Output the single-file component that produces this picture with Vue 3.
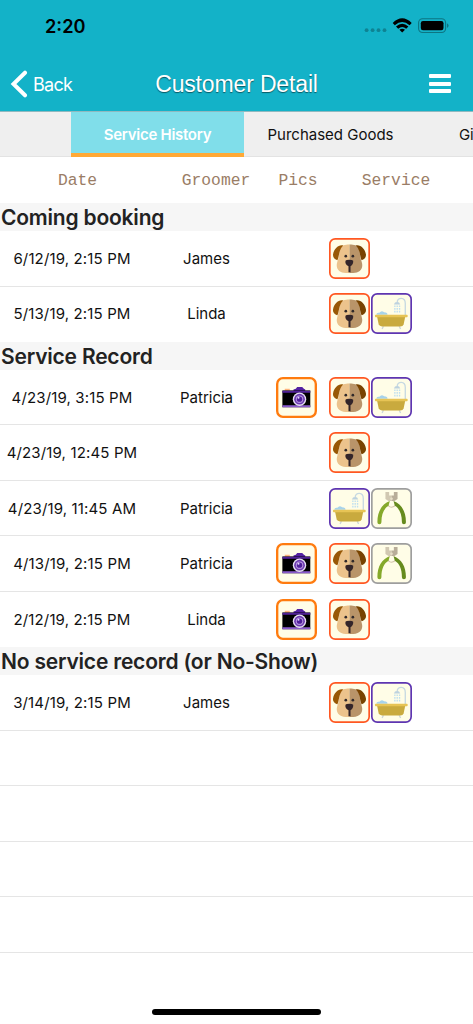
<script setup>
const columns = ['Date', 'Groomer', 'Pics', 'Service']

const sections = [
  {
    title: 'Coming booking',
    rows: [
      { date: '6/12/19, 2:15 PM', groomer: 'James', pics: false, services: ['dog'] },
      { date: '5/13/19, 2:15 PM', groomer: 'Linda', pics: false, services: ['dog', 'bath'] },
    ],
  },
  {
    title: 'Service Record',
    rows: [
      { date: '4/23/19, 3:15 PM', groomer: 'Patricia', pics: true, services: ['dog', 'bath'] },
      { date: '4/23/19, 12:45 PM', groomer: '', pics: false, services: ['dog'] },
      { date: '4/23/19, 11:45 AM', groomer: 'Patricia', pics: false, services: ['bath', 'clipper'] },
      { date: '4/13/19, 2:15 PM', groomer: 'Patricia', pics: true, services: ['dog', 'clipper'] },
      { date: '2/12/19, 2:15 PM', groomer: 'Linda', pics: true, services: ['dog'] },
    ],
  },
  {
    title: 'No service record (or No-Show)',
    rows: [
      { date: '3/14/19, 2:15 PM', groomer: 'James', pics: false, services: ['dog', 'bath'] },
    ],
  },
]
</script>

<template>
  <div class="phone">
    <svg class="symbols" width="0" height="0" aria-hidden="true">
      <symbol id="dog" viewBox="0 0 122 122">
        <rect x="2.5" y="2.5" width="117" height="117" rx="16" fill="#fffde7" stroke="#ff5722" stroke-width="5" />
        <path d="M61 19C47 19 37 21 33 32C29 48 30 58 25 70C18 90 30 104 50 104H61Z" fill="#ecc38c" />
        <path d="M61 19C75 19 85 21 89 32C93 48 92 58 97 70C104 90 92 104 72 104H61Z" fill="#b99469" />
        <path d="M42 22C28 19 15 32 12 49C11 59 18 64 25 66C31 55 28 36 42 22Z" fill="#985806" />
        <path d="M80 22C94 19 107 32 110 49C111 59 104 64 97 66C91 55 94 36 80 22Z" fill="#784300" />
        <circle cx="50" cy="54" r="4" fill="#30292b" />
        <circle cx="71" cy="54" r="4" fill="#30292b" />
        <path d="M49 68Q51 65 60 65Q70 65 72 68Q73 79 64 84V102H58V84Q47 79 49 68Z" fill="#33252a" />
      </symbol>
      <symbol id="bath" viewBox="0 0 122 122">
        <rect x="2.5" y="2.5" width="117" height="117" rx="16" fill="#fffde7" stroke="#5e35b1" stroke-width="5" />
        <path d="M102 67V31C102 11 78 12 78 28" fill="none" stroke="#c7d9e2" stroke-width="4" />
        <path d="M68 34Q70 27 78 27Q85 27 87 34Z" fill="#bdd2df" />
        <path d="M71 37V61M78 37V61M85 37V61" stroke="#bfdff0" stroke-width="4" stroke-dasharray="5 3" />
        <path d="M16 65Q16 57 25 59Q31 50 39 57Q50 57 49 65Z" fill="#a7d3eb" />
        <path d="M37 99L33 107M84 99L88 107" stroke="#cbd5da" stroke-width="4" />
        <path d="M18 70H102L97 94Q95 100 87 100H33Q25 99 23 94Z" fill="#c9aa3e" />
        <rect x="12" y="65" width="97" height="7" rx="2" fill="#e7c455" />
      </symbol>
      <symbol id="clipper" viewBox="0 0 122 122">
        <rect x="2.5" y="2.5" width="117" height="117" rx="16" fill="#fffde7" stroke="#9e9e9e" stroke-width="5" />
        <path d="M50 45C48 61 73 61 73 45" fill="none" stroke="#d1c2aa" stroke-width="3" />
        <path d="M56 39C32 49 19 69 19 102Q19 108 25 108Q31 108 31 102C31 78 38 61 52 53Z" fill="#85a92b" />
        <path d="M67 39C91 49 104 69 104 102Q104 108 98 108Q92 108 92 102C92 78 85 61 71 53Z" fill="#668b1d" />
        <path d="M43 12H54V22H61V39L52 39L43 33Z" fill="#d1c8b2" />
        <path d="M61 22H68V12H79V33L70 39L61 39Z" fill="#b8ad99" />
        <circle cx="61" cy="32" r="4" fill="#e7dfc8" />
      </symbol>
      <symbol id="camera" viewBox="0 0 122 122">
        <rect x="3.5" y="3.5" width="115" height="115" rx="17" fill="#fffde7" stroke="#ff7b0f" stroke-width="7" />
        <rect x="26" y="35" width="15" height="6" fill="#ffb47c" />
        <path d="M52 42V37L59 35L63 30H78L83 35L87 37V42Z" fill="#5422a2" />
        <rect x="19" y="40" width="83" height="50" fill="#000" />
        <path d="M19 41H102V47H19Z" fill="#502296" />
        <path d="M19 84H102V90H19Z" fill="#8a5bcc" />
        <circle cx="70" cy="66" r="20" fill="#e7dff3" />
        <circle cx="70" cy="66" r="16" fill="#6c3bb1" />
        <circle cx="70" cy="66" r="11" fill="#b696df" />
        <circle cx="70" cy="66" r="8" fill="#50209b" />
        <circle cx="67" cy="62" r="3" fill="#e4d5ff" />
      </symbol>
    </svg>

    <header>
      <div class="status">
        <span class="clock">2:20</span>
        <svg class="signals" width="86" height="18" viewBox="0 0 86 18">
          <g fill="#0e8393"><circle cx="3.6" cy="12.2" r="1.9" /><circle cx="9.6" cy="12.2" r="1.9" /><circle cx="15.5" cy="12.2" r="1.9" /><circle cx="21.5" cy="12.2" r="1.9" /></g>
          <path d="M29.7 5Q39.2 -4.3 48.7 5L46.6 7.2Q39.2 .7 31.8 7.2ZM33 8.5Q39.2 3.2 45.4 8.5L43.2 10.7Q39.2 7.4 35.2 10.7ZM36.4 11.8Q39.2 9.8 42 11.8L39.2 14.4Z" fill="#000" />
          <rect x="55.6" y=".8" width="27" height="13.7" rx="4" fill="none" stroke="#0d7582" stroke-width="1.1" />
          <rect x="57.8" y="3" width="22.7" height="9.3" rx="2.2" />
          <path d="M84 5.3Q87.3 7.6 84 10Z" fill="#0d7582" />
        </svg>
      </div>
      <nav>
        <div class="back">
          <svg width="18" height="28" viewBox="0 0 18 28"><path d="M15 2.7L3.5 14L15 25.3" fill="none" stroke="#fff" stroke-width="4" stroke-linecap="round" stroke-linejoin="miter" /></svg>
          <span>Back</span>
        </div>
        <h1>Customer Detail</h1>
        <div class="menu"><i></i><i></i><i></i></div>
      </nav>
    </header>

    <div class="tabs">
      <div class="tab blank"></div>
      <div class="tab active"><span>Service History</span></div>
      <div class="tab goods"><span>Purchased Goods</span></div>
      <div class="tab gift"><span>Gi</span></div>
    </div>

    <div class="columns">
      <span v-for="c in columns" :key="c">{{ c }}</span>
    </div>

    <section v-for="s in sections" :key="s.title">
      <h2>{{ s.title }}</h2>
      <div v-for="r in s.rows" :key="r.date" class="row">
        <span class="date">{{ r.date }}</span>
        <span class="groomer">{{ r.groomer }}</span>
        <span class="pics"><svg v-if="r.pics"><use href="#camera" /></svg></span>
        <span class="services"><svg v-for="i in r.services" :key="i"><use :href="'#' + i" /></svg></span>
      </div>
    </section>
    <div v-for="n in 4" :key="n" class="row"></div>
    <footer><div class="home"></div></footer>
  </div>
</template>

<style>
body { background: #fff; }
</style>

<style scoped>
.phone { width: 473px; height: 1024px; overflow: hidden; display: flex; flex-direction: column; background: #fff; color: #111; font-family: Inter, sans-serif; }
.phone > * { flex-shrink: 0; }
.symbols { display: block; width: 0; height: 0; }
header { height: 112px; background: #13b2c8; border-bottom: 1px solid #8fb9bf; box-sizing: border-box; }
.status { height: 52px; display: flex; justify-content: space-between; padding: 0 24px 0 45px; }
.clock { padding-top: 14px; font-size: 18.2px; line-height: 24px; font-weight: 600; color: #000; }
.signals { margin-top: 18px; overflow: visible; }
nav { height: 63px; display: grid; grid-template-columns: 110px 1fr 110px; align-items: center; color: #fff; }
.back { display: flex; align-items: center; padding-left: 10px; gap: 5px; font-size: 18px; letter-spacing: -.7px; }
.back span { padding-top: 2px; }
h1 { margin: 0; text-align: center; font: 400 23px/28px "Liberation Sans", sans-serif; letter-spacing: -.15px; text-shadow: 0 1px 1px rgba(0, 0, 0, .5); white-space: nowrap; }
.menu { justify-self: end; margin-right: 22px; width: 22px; display: grid; gap: 3.4px; }
.menu i { height: 4px; background: #fff; border-radius: 1px; }
.tabs { height: 45px; display: grid; grid-template-columns: 71px 173px 173px 56px; background: #efefef; overflow: hidden; font-size: 15px; }
.tab { height: 45px; box-sizing: border-box; border-bottom: 1px solid #e3e3e3; text-align: center; line-height: 45px; white-space: nowrap; }
.active { background: #80deea; color: #fff; font-weight: 600; border-bottom: 4px solid #ffa936; letter-spacing: -.28px; }
.gift { text-align: left; padding-left: 42px; letter-spacing: -.3px; }
.columns { height: 46.4px; display: grid; grid-template-columns: 155px 122px 42px 154px; line-height: 47px; text-align: center; font-family: "Liberation Mono", monospace; font-size: 16.3px; color: #9a7d66; white-space: nowrap; }
h2 { margin: 0; height: 27.75px; line-height: 29px; background: #f6f6f6; color: #222; font-size: 21px; font-weight: 600; letter-spacing: -.2px; white-space: nowrap; padding-left: 1px; }
.row { height: 55.5px; box-sizing: border-box; border-bottom: 1px solid #e5e5e5; display: grid; grid-template-columns: 144px 124px 57px 148px; align-items: center; font-size: 15px; }
section .row:last-child { border-bottom-color: transparent; }
section:last-of-type .row:last-child { border-bottom-color: #e5e5e5; }
.date, .groomer { text-align: center; white-space: nowrap; }
.date { letter-spacing: .14px; }
.groomer { padding-left: 1px; }
.pics, .services { display: flex; }
.pics { justify-content: center; }
.services { padding-left: 4px; gap: .7px; }
.pics svg, .services svg { width: 41px; height: 41px; display: block; }
footer { flex: 1; display: flex; justify-content: center; align-items: flex-end; }
.home { width: 169px; height: 6px; border-radius: 3px; background: #000; margin-bottom: 9px; }
</style>
